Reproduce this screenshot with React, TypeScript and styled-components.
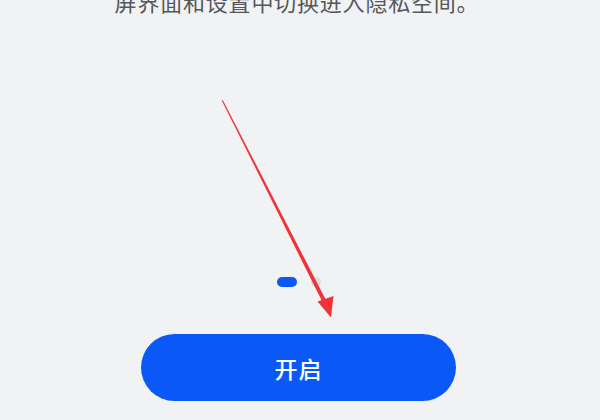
import React from "react";
import styled, { createGlobalStyle } from "styled-components";

const Global = createGlobalStyle`
  html, body { margin: 0; padding: 0; background: #f1f2f4; }
  body { font-family: "Noto Sans CJK SC", "Noto Sans", sans-serif; }
`;

const Page = styled.div`
  position: relative;
  width: 600px;
  height: 420px;
  overflow: hidden;
  background: #f1f2f4;
  display: flex;
  flex-direction: column;
  align-items: center;
`;

const Description = styled.p`
  margin: -14px 0 0 -6px;
  font-size: 22px;
  line-height: 30px;
  letter-spacing: 0.8px;
  color: #55575b;
  white-space: nowrap;
`;

const Pager = styled.div`
  margin-top: 261px;
  display: flex;
  align-items: center;
  gap: 14px;
  margin-left: -2px;
`;

const Dot = styled.span<{ $active?: boolean }>`
  display: block;
  height: 10px;
  width: ${(p) => (p.$active ? "20px" : "10px")};
  border-radius: 5px;
  background: ${(p) => (p.$active ? "#0a59f7" : "#dcdee2")};
`;

const PrimaryButton = styled.button`
  margin-top: 47px;
  margin-left: -3px;
  width: 315px;
  height: 67px;
  border: none;
  border-radius: 34px;
  background: #0a59f7;
  color: #ffffff;
  font-family: "Noto Sans CJK SC", "Noto Sans", sans-serif;
  font-size: 23px;
  font-weight: 500;
  letter-spacing: 1px;
  display: flex;
  align-items: center;
  justify-content: center;
  padding: 0;
`;

const ArrowOverlay = styled.svg`
  position: absolute;
  left: 0;
  top: 0;
  width: 600px;
  height: 420px;
  pointer-events: none;
`;

export default function App() {
  return (
    <>
      <Global />
      <Page>
        <Description>屏界面和设置中切换进入隐私空间。</Description>
        <Pager>
          <Dot $active />
          <Dot />
        </Pager>
        <PrimaryButton>开启</PrimaryButton>
        <ArrowOverlay viewBox="0 0 600 420">
          <polygon
            points="221.5,100 223,100.5 326.2,300.5 322.6,302.3"
            fill="#ef3439"
          />
          <polygon points="317.5,301.5 333.5,296 331,317.5" fill="#ef3439" />
        </ArrowOverlay>
      </Page>
    </>
  );
}
